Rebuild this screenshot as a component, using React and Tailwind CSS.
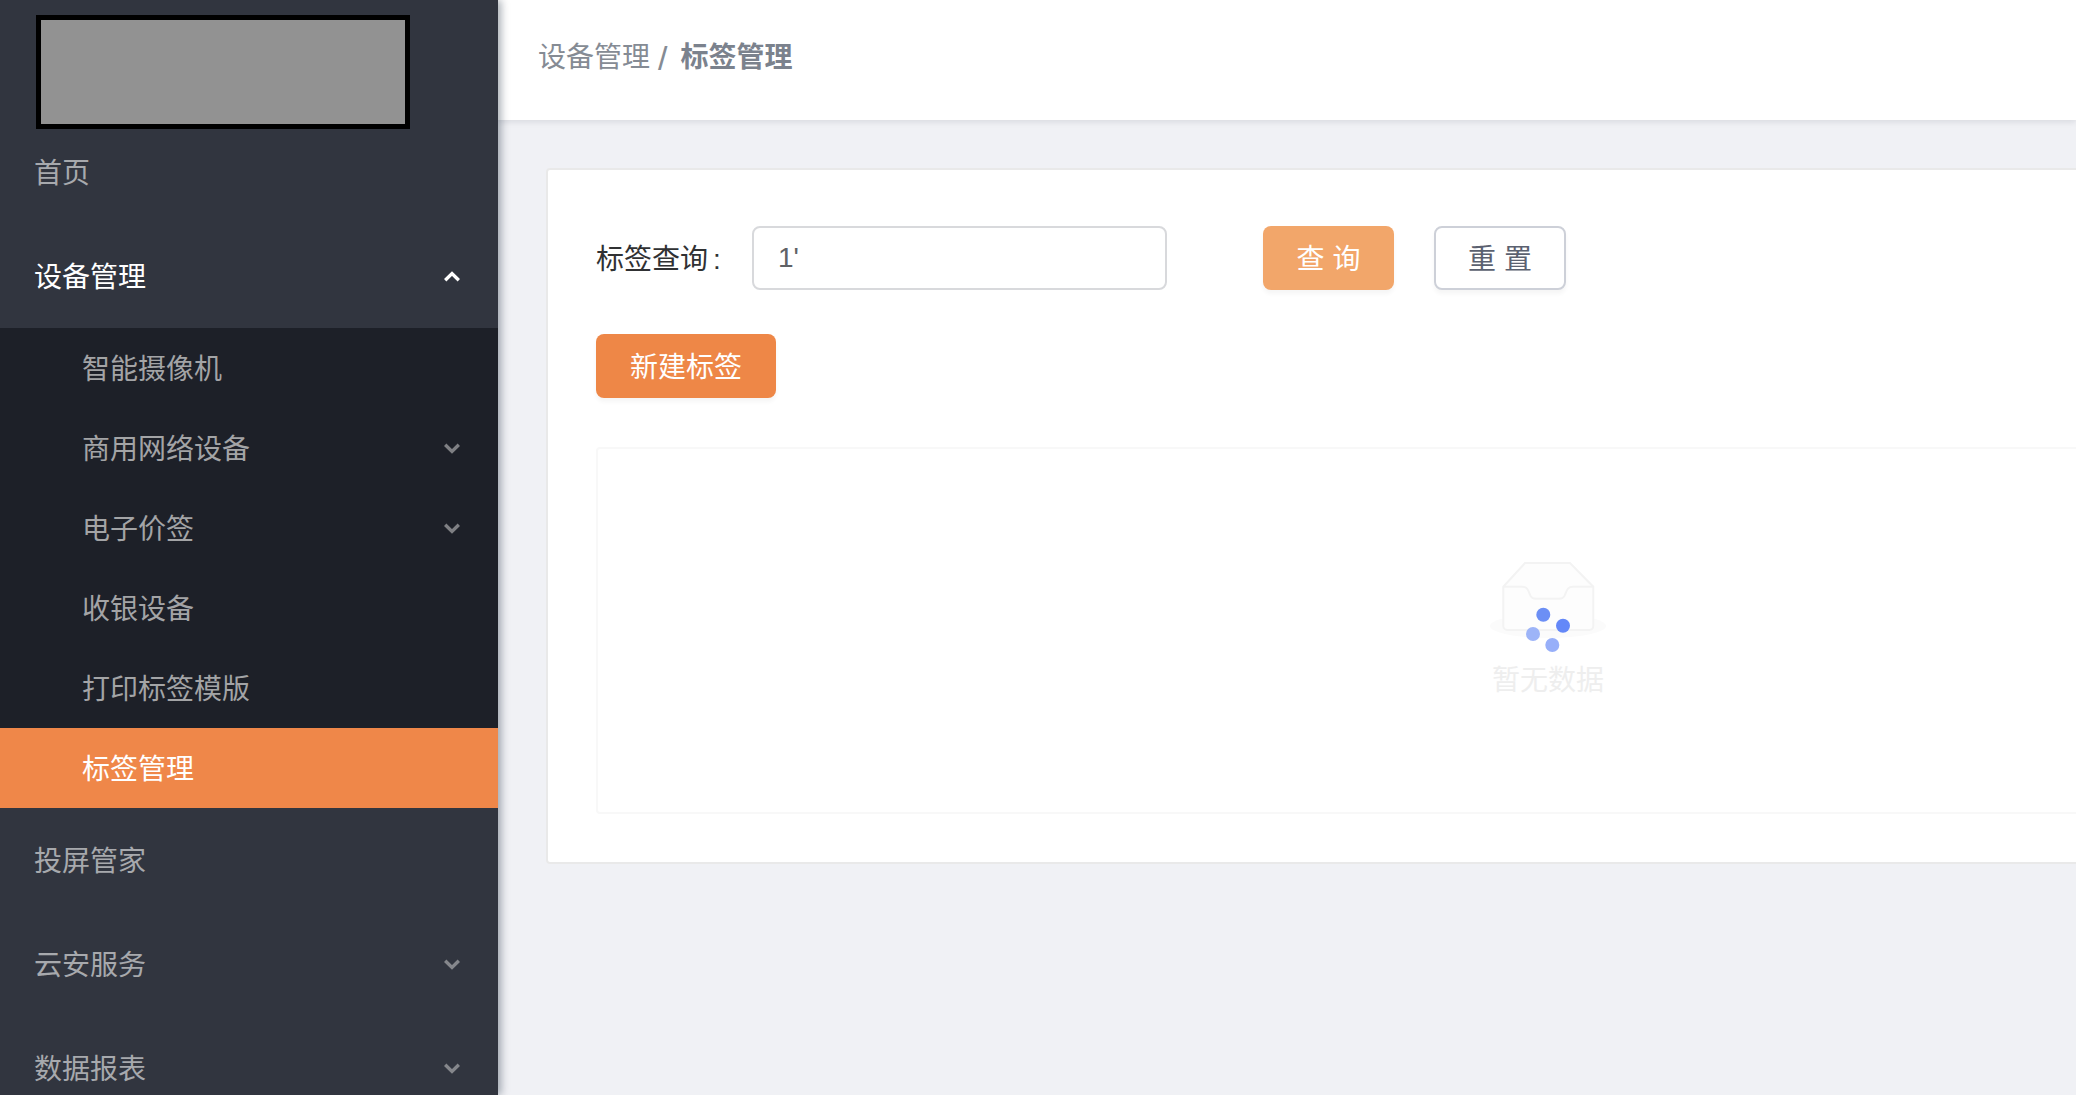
const subItems = [
  { label: "智能摄像机" },
  { label: "商用网络设备", arrow: true },
  { label: "电子价签", arrow: true },
  { label: "收银设备" },
  { label: "打印标签模版" },
];

function Chevron({ up, className }) {
  return (
    <svg width="16" height="11" viewBox="0 0 16 11" fill="none" className={className}>
      <path
        d={up ? "M1.2 9.2L8 2.6L14.8 9.2" : "M1.2 1.8L8 8.4L14.8 1.8"}
        stroke="currentColor"
        strokeWidth="3.4"
      />
    </svg>
  );
}

function MenuRow({ label, arrow, open }) {
  return (
    <div className={`flex h-[104px] shrink-0 items-center justify-between pl-[34px] pr-[38px] ${open ? "text-white" : "text-[#a7a9ad]"}`}>
      <span className="pt-[4px]">{label}</span>
      {arrow && <Chevron up={open} className={open ? "text-white" : "text-[#85878c]"} />}
    </div>
  );
}

function EmptyIcon() {
  return (
    <svg width="124" height="96" viewBox="0 0 124 96" fill="none">
      <ellipse cx="62" cy="64" rx="58" ry="12" fill="#fbfbfb" />
      <path
        d="M17.3 24.7L39 1H84L107.3 24.7V64a4 4 0 0 1-4 4H21.3a4 4 0 0 1-4-4Z"
        fill="#fdfdfd"
        stroke="#f3f3f3"
        strokeWidth="2"
      />
      <path
        d="M17.3 24.7H36c6 0 6 4 8 8c1 3 3 4 6 4H73c3 0 5-1 6-4c2-4 2-8 8-8H107.3"
        stroke="#f3f3f3"
        strokeWidth="2"
      />
      <circle cx="57.3" cy="52.7" r="7" fill="#6c8ff5" />
      <circle cx="77" cy="63.7" r="7" fill="#6488f8" />
      <circle cx="47" cy="72" r="7" fill="#9db4f8" />
      <circle cx="66.3" cy="83" r="7" fill="#97aff9" />
    </svg>
  );
}

export default function App() {
  return (
    <div className="flex h-screen w-full overflow-hidden bg-[#f0f1f5] font-['Liberation_Sans','Noto_Sans_CJK_SC',sans-serif] text-[28px]">
      {/* sidebar */}
      <aside className="relative z-10 flex w-[498px] shrink-0 flex-col overflow-hidden bg-[#31353f] shadow-[3px_0_8px_rgba(0,21,41,0.35)]">
        <div className="mb-[-9px] shrink-0 pl-[36px] pt-[15px]">
          <div className="h-[114px] w-[374px] border-[5px] border-black bg-[#929292]"></div>
        </div>
        <MenuRow label="首页" />
        <MenuRow label="设备管理" arrow open />
        <div className="shrink-0 bg-[#1d2028]">
          {subItems.map((item) => (
            <div key={item.label} className="flex h-[80px] items-center justify-between pl-[82px] pr-[38px] text-[#a3a4a6]">
              <span className="pt-[4px]">{item.label}</span>
              {item.arrow && <Chevron className="text-[#7f8084]" />}
            </div>
          ))}
          <div className="flex h-[80px] items-center bg-[#ef8749] pl-[82px] text-white">
            <span className="pt-[4px]">标签管理</span>
          </div>
        </div>
        <MenuRow label="投屏管家" />
        <MenuRow label="云安服务" arrow />
        <MenuRow label="数据报表" arrow />
      </aside>

      {/* main */}
      <main className="flex min-w-0 flex-1 flex-col overflow-hidden">
        <header className="relative flex h-[120px] shrink-0 items-center bg-white pb-[4px] pl-[40px] text-[#858b94] shadow-[0_2px_6px_rgba(0,21,41,0.1)]">
          <span>设备管理</span>
          <span className="ml-[8px] mr-[13px] text-[34px] leading-none">/</span>
          <span className="font-bold text-[#7b828d]">标签管理</span>
        </header>

        <div className="pl-[48px] pt-[48px]">
          <div className="w-[2004px] rounded-[4px] border-2 border-[#e9e9e9] bg-white px-[48px] pb-[48px] pt-[56px]">
            <div className="flex items-center">
              <label className="flex w-[156px] shrink-0 text-[#303133]">
                <span className="pt-[3px]">标签查询</span>
                <span className="ml-[5px] pt-[3px]">:</span>
              </label>
              <input
                readOnly
                value="1'"
                className="h-[64px] w-[415px] rounded-[8px] border-2 border-[#d8d9dc] bg-white pl-[24px] text-[#606266] outline-none"
              />
              <button className="ml-[96px] h-[64px] w-[131px] rounded-[8px] bg-[#f2a66a] pt-[3px] text-white shadow-[0_4px_4px_rgba(0,0,0,0.04)]">
                查 询
              </button>
              <button className="ml-[40px] h-[64px] w-[132px] rounded-[8px] border-2 border-[#cdd0d8] bg-white pt-[3px] text-[#5b6170] shadow-[0_4px_4px_rgba(0,0,0,0.04)]">
                重 置
              </button>
            </div>

            <button className="mt-[44px] block h-[64px] w-[180px] rounded-[8px] bg-[#ee8747] pt-[3px] text-white shadow-[0_4px_4px_rgba(0,0,0,0.04)]">
              新建标签
            </button>

            <div className="mt-[49px] flex h-[367px] flex-col items-center justify-center rounded-[4px] border-2 border-[#f8f8f8] pb-[2px]">
              <EmptyIcon />
              <div className="h-[40px] pt-[3px] leading-[40px] text-[#eeeeee]">暂无数据</div>
            </div>
          </div>
        </div>
      </main>
    </div>
  );
}
